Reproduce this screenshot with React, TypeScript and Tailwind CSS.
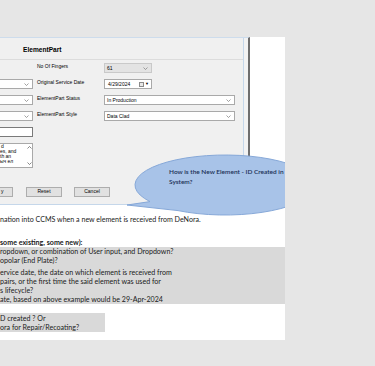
const Chevron = ({ color = "#7a7a7a" }: { color?: string }) => (
  <svg width="5" height="3" viewBox="0 0 5 3" className="shrink-0">
    <path d="M0.5 0.5 L2.5 2.5 L4.5 0.5" fill="none" stroke={color} strokeWidth="0.7" />
  </svg>
);

function Select({ text, className = "", disabled = false }: { text: string; className?: string; disabled?: boolean }) {
  return (
    <div
      className={`flex h-[10px] items-center justify-between border pl-[2px] pr-[3px] ${
        disabled ? "border-[#c9c9c9] bg-[#e3e3e3]" : "border-[#a9a9a9] bg-white"
      } ${className}`}
    >
      <span className="leading-[8px]">{text}</span>
      <Chevron />
    </div>
  );
}

const ROWS = [
  { label: "No Of Fingers" },
  { label: "Original Service Date" },
  { label: "ElementPart Status" },
  { label: "ElementPart Style" },
];

function Dialog() {
  return (
    <div className="flex h-[168px] w-[250px] border-r-2 border-t border-[#6e6e6e] border-t-[#cddcec] bg-[#f2f2f2] font-['Liberation_Sans',sans-serif] text-[5px] text-black">
      <div className="flex w-[244px] flex-col border-r border-b border-[#c5d7ea] bg-[#f0f0f0]">
        <div className="h-[22px] border-b border-[#dcdcdc] pl-[23px] pt-[8px] text-[6.6px] font-bold leading-[7px]">
          ElementPart
        </div>

        <div className="flex pt-[3px]">
          {/* left column, cut off by the screenshot */}
          <div className="mt-[16px] flex w-[33px] flex-col gap-[6px]">
            <Select text="" className="border-l-0" />
            <Select text="" className="border-l-0" />
            <Select text="" className="border-l-0" />
            <div className="h-[10px] border border-l-0 border-[#7a7a7a] bg-white" />
            <div className="flex h-[25px] overflow-hidden border border-l-0 border-[#a9a9a9] bg-white">
              <div className="flex-1 overflow-hidden leading-[5px]">
                <div className="pl-px">d</div>
                <div>es, and</div>
                <div>th an</div>
                <div>ыч ел</div>
              </div>
              <div className="flex w-[6px] flex-col items-center justify-between py-[2px]">
                <span className="rotate-180">
                  <Chevron color="#555" />
                </span>
                <Chevron color="#555" />
              </div>
            </div>
          </div>

          <div className="ml-[4px] flex flex-col gap-[6px]">
            {ROWS.map((r, i) => (
              <div key={r.label} className="flex items-start">
                <div className="w-[67px] leading-[6px]">{r.label}</div>
                {i === 0 && <Select text="61" disabled className="w-[48px]" />}
                {i === 1 && (
                  <div className="flex h-[10px] w-[48px] items-center justify-between border border-[#a9a9a9] bg-white pl-[3px] pr-[2px]">
                    <span className="leading-[8px]">4/29/2024</span>
                    <span className="flex items-center gap-[1px]">
                      <span className="h-[5px] w-[5px] border border-[#8a8a8a] bg-[#e8e8e8]" />
                      <span className="text-[4px] leading-[4px]">▼</span>
                    </span>
                  </div>
                )}
                {i === 2 && <Select text="In Production" className="w-[131px]" />}
                {i === 3 && <Select text="Data Clad" className="w-[131px]" />}
              </div>
            ))}
          </div>
        </div>

        <div className="mt-[19px] flex h-[10px] items-stretch">
          <div className="flex w-[13px] items-center border border-l-0 border-[#adadad] bg-[#e1e1e1] pl-[1px]">y</div>
          <div className="ml-[13px] flex w-[36px] items-center justify-center border border-[#adadad] bg-[#e1e1e1]">Reset</div>
          <div className="ml-[12px] flex w-[36px] items-center justify-center border border-[#adadad] bg-[#e1e1e1]">Cancel</div>
        </div>
      </div>
    </div>
  );
}

function Bubble() {
  return (
    <>
      <svg className="pointer-events-none absolute left-0 top-0" width="285" height="303" viewBox="0 0 285 303">
        <path
          d="M150 164.6 L127 168 L178 173.6 A90 30 0 1 0 150 164.6 Z"
          fill="#a8c3e8"
          stroke="#86a8d8"
          strokeWidth="1"
        />
      </svg>
      <div className="absolute left-[169px] top-[130px] whitespace-nowrap font-['Lato',sans-serif] text-[6.5px] font-semibold leading-[10px] text-[#1a2f55]">
        How is the New Element - ID Created in
        <br />
        System?
      </div>
    </>
  );
}

export default function App() {
  return (
    <div className="h-[366px] w-[375px] overflow-hidden bg-[#e6e6e6] pt-[37px]">
      <div className="relative h-[303px] w-[285px] overflow-hidden bg-white">
        <Dialog />

        <div className="whitespace-nowrap font-['Lato',sans-serif] text-[7.1px] leading-[9px] text-[#1a1a1a]">
          <p className="mt-[10px]">nation into CCMS when a new element is received from DeNora.</p>
          <p className="mt-[14px] font-bold">some existing, some new):</p>
          <div className="h-[57px] bg-[#d9d9d9]">
            <p>ropdown, or combination of User input, and Dropdown?</p>
            <p>opolar (End Plate)?</p>
            <p className="mt-[3px]">ervice date, the date on which element is received from</p>
            <p>pairs, or the first time the said element was used for</p>
            <p>s lifecycle?</p>
            <p>ate, based on above example would be 29-Apr-2024</p>
          </div>
          <div className="mt-[9px] h-[19px] w-[105px] bg-[#d9d9d9] pt-px">
            <p>D created ? Or</p>
            <p>ora for Repair/Recoating?</p>
          </div>
        </div>

        <Bubble />
      </div>
    </div>
  );
}
